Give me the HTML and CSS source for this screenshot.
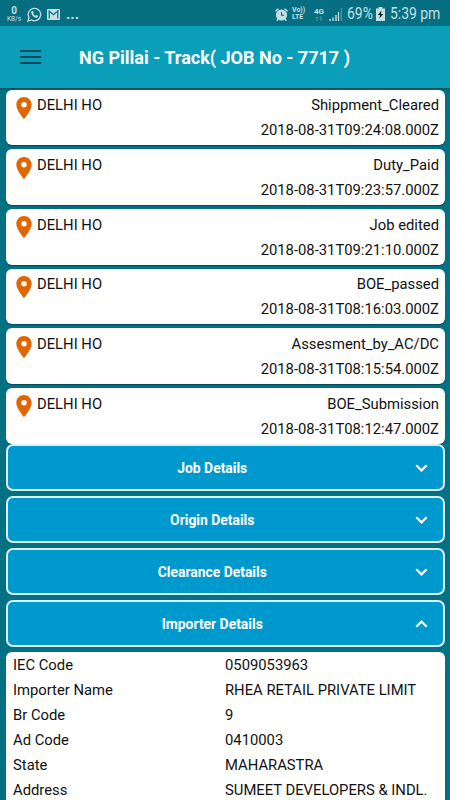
FILE: index.html
```
<!DOCTYPE html>
<html lang="en">
  <head>
    <meta charset="UTF-8" />
    <meta name="viewport" content="width=device-width, initial-scale=1.0" />
    <title>NG Pillai - Track</title>
    <link rel="stylesheet" href="styles.css">
  </head>
  <body>
    <!-- shared icons -->
    <svg class="icon-defs" width="0" height="0">
      <symbol id="pin" viewBox="5 2 14 20">
        <path d="M12 2C8.13 2 5 5.13 5 9c0 5.25 7 13 7 13s7-7.75 7-13c0-3.87-3.13-7-7-7zm0 9.5a2.5 2.5 0 0 1 0-5 2.5 2.5 0 0 1 0 5z" />
      </symbol>
      <symbol id="chevron" viewBox="0 0 12 8">
        <path d="M.8 1.2L6 6.400l5.200-5.200" fill="none" stroke="#fff" stroke-width="2.200" />
      </symbol>
    </svg>

    <div class="status-bar">
      <div class="net-speed"><b>0</b><span>KB/s</span></div>
      <svg class="whatsapp" width="15" height="15" viewBox="0 0 15 15">
        <path d="M1 14l1-3.5A6.2 6.2 0 1 1 4.500 13z" fill="none" stroke="#c5dfe3" stroke-width="1.3" />
        <path d="M4.900 4.100l1-.2.900 1.900-.6.900c.5 1 1.200 1.600 2.200 2.100l.8-.9 1.900.9-.2 1c-.5.8-1.500 1-2.400.7C6.400 9.700 5 8.200 4.400 6.400c-.3-.9 0-1.700.5-2.300z" fill="#c5dfe3" />
      </svg>
      <svg class="gmail" width="13" height="11" viewBox="0 0 13 11">
        <rect width="13" height="11" rx="1" fill="#c5dfe3" />
        <path d="M2.200 9.500V2l4.300 3.600L10.800 2v7.500" fill="none" stroke="#056f81" stroke-width="1.2" />
      </svg>
      <span class="more">...</span>

      <svg class="alarm" width="13" height="13" viewBox="0 0 13 13">
        <circle cx="6.500" cy="7" r="5.600" fill="#c5dfe3" />
        <path d="M.5 3.300L3.400.8M12.500 3.300L9.600.8M3 11l-1.200 1.700M10 11l1.200 1.700" stroke="#c5dfe3" stroke-width="1.500" />
        <path d="M6.500 4v3.300h2.700" fill="none" stroke="#056f81" stroke-width="1.1" />
      </svg>
      <div class="volte"><span>Vo))</span><span>LTE</span></div>
      <div class="network">
        <span>4G</span>
        <svg width="8" height="5" viewBox="0 0 8 5">
          <path d="M2 5V1M.7 2.200L2 .8l1.300 1.400M6 0v4M4.700 2.800L6 4.200l1.300-1.400" fill="none" stroke="#4d9ba7" stroke-width=".9" />
        </svg>
      </div>
      <svg class="signal" width="13" height="13" viewBox="0 0 13 13">
        <path d="M1 13v-2M4 13V9.500M7 13V7" stroke="#c5dfe3" stroke-width="1.400" />
        <path d="M9.500 13V4" stroke="#c5dfe3" stroke-width="1.2" />
        <path d="M12.300 13V0" stroke="#4d9ba7" stroke-width="1.2" />
      </svg>
      <div class="percent"><span>69%</span></div>
      <svg class="battery" width="9" height="14" viewBox="0 0 9 14">
        <path d="M2.500 0h4v1.500H9V14H0V1.500h2.500z" fill="#c5dfe3" />
        <path d="M5.500 3.500L1.800 8h2.200l-.6 3.500L7.200 7H5z" fill="#10272c" />
      </svg>
      <div class="clock"><span>5:39 pm</span></div>
    </div>

    <div class="navbar">
      <div class="menu-btn"><i></i><i></i><i></i></div>
      <h1>NG Pillai - Track( JOB No - 7717 )</h1>
    </div>

    <div class="content">
      <div class="track-list">
        <div class="track-card">
          <svg class="pin"><use href="#pin" /></svg>
          <span class="place">DELHI HO</span>
          <div class="event"><p>Shippment_Cleared</p><p>2018-08-31T09:24:08.000Z</p></div>
        </div>
        <div class="track-card">
          <svg class="pin"><use href="#pin" /></svg>
          <span class="place">DELHI HO</span>
          <div class="event"><p>Duty_Paid</p><p>2018-08-31T09:23:57.000Z</p></div>
        </div>
        <div class="track-card">
          <svg class="pin"><use href="#pin" /></svg>
          <span class="place">DELHI HO</span>
          <div class="event"><p>Job edited</p><p>2018-08-31T09:21:10.000Z</p></div>
        </div>
        <div class="track-card">
          <svg class="pin"><use href="#pin" /></svg>
          <span class="place">DELHI HO</span>
          <div class="event"><p>BOE_passed</p><p>2018-08-31T08:16:03.000Z</p></div>
        </div>
        <div class="track-card">
          <svg class="pin"><use href="#pin" /></svg>
          <span class="place">DELHI HO</span>
          <div class="event"><p>Assesment_by_AC/DC</p><p>2018-08-31T08:15:54.000Z</p></div>
        </div>
        <div class="track-card">
          <svg class="pin"><use href="#pin" /></svg>
          <span class="place">DELHI HO</span>
          <div class="event"><p>BOE_Submission</p><p>2018-08-31T08:12:47.000Z</p></div>
        </div>
      </div>

      <div class="accordion">
        <div class="accordion-btn"><span>Job Details</span><svg class="chevron"><use href="#chevron" /></svg></div>
        <div class="accordion-btn"><span>Origin Details</span><svg class="chevron"><use href="#chevron" /></svg></div>
        <div class="accordion-btn"><span>Clearance Details</span><svg class="chevron"><use href="#chevron" /></svg></div>
        <div class="accordion-btn open"><span>Importer Details</span><svg class="chevron"><use href="#chevron" /></svg></div>
      </div>

      <dl class="details">
        <dt>IEC Code</dt><dd>0509053963</dd>
        <dt>Importer Name</dt><dd>RHEA RETAIL PRIVATE LIMIT</dd>
        <dt>Br Code</dt><dd>9</dd>
        <dt>Ad Code</dt><dd>0410003</dd>
        <dt>State</dt><dd>MAHARASTRA</dd>
        <dt>Address</dt><dd>SUMEET DEVELOPERS &amp; INDL.</dd>
      </dl>
    </div>
  </body>
</html>
```
FILE: styles.css
```
* {
  box-sizing: border-box;
}

body {
  font-family: Roboto, "Liberation Sans", sans-serif;
  font-size: 14.8px;
  color: #111;
  background-color: #047083;
  display: flex;
  flex-direction: column;
  height: 100vh;
  margin: 0;
  overflow: hidden;
}

.icon-defs {
  position: absolute;
}

/* status bar */
.status-bar {
  display: flex;
  align-items: center;
  flex-shrink: 0;
  height: 26px;
  padding: 2px 8px 0 6px;
  background-color: #056f81;
  color: #c5dfe3;
}

.net-speed {
  display: flex;
  flex-direction: column;
  align-items: center;
  width: 16px;
  font-size: 6.5px;
  line-height: 7px;
}

.net-speed b {
  font-size: 10px;
  line-height: 10px;
}

.whatsapp {
  margin-left: 5px;
}

.gmail {
  margin-left: 5px;
}

.more {
  margin-left: 6px;
  font-size: 15px;
  font-weight: bold;
  line-height: 16px;
}

.alarm {
  margin-left: auto;
}

.volte {
  display: flex;
  flex-direction: column;
  width: 14px;
  margin-left: 4px;
  font-size: 7px;
  font-weight: bold;
  line-height: 7px;
}

.network {
  display: flex;
  flex-direction: column;
  align-items: center;
  width: 12px;
  margin-left: 7px;
  font-size: 8px;
  font-weight: bold;
  line-height: 8px;
}

.signal {
  margin-left: 4px;
}

.percent,
.clock {
  font-size: 16px;
  line-height: 20px;
  white-space: nowrap;
}

.percent {
  width: 26px;
  margin-left: 5px;
}

.percent span,
.clock span {
  display: inline-block;
  transform: scaleX(0.87);
  transform-origin: left;
}

.battery {
  margin-left: 3px;
}

.clock {
  width: 52px;
  margin-left: 5px;
}

/* title bar */
.navbar {
  display: flex;
  align-items: center;
  flex-shrink: 0;
  height: 62px;
  padding: 0 20px 1px;
  background-color: #0a9eb8;
  box-shadow: 0 1px 2px rgba(0, 0, 0, 0.35);
}

.menu-btn {
  display: flex;
  flex-direction: column;
  gap: 4px;
  width: 21px;
}

.menu-btn i {
  height: 2px;
  background-color: #07495a;
}

.navbar h1 {
  margin: 2px 0 0 38px;
  font-size: 18px;
  font-weight: bold;
  color: #fff;
  white-space: nowrap;
}

.content {
  padding: 1.5px 5px 0 5.5px;
}

/* tracking events */
.track-list {
  display: flex;
  flex-direction: column;
  gap: 4px;
}

.track-card {
  display: flex;
  align-items: flex-start;
  height: 55.7px;
  padding: 3.7px 6px 0 10.5px;
  background-color: #fff;
  border-radius: 6px;
  box-shadow: 0 1px 1px rgba(0, 0, 0, 0.35);
  line-height: 25px;
}

.pin {
  width: 16px;
  height: 22px;
  margin-top: 3.8px;
  fill: #e26600;
}

.place {
  margin-left: 5px;
}

.event {
  margin-left: auto;
  text-align: right;
}

.event p {
  margin: 0;
}

/* collapsible sections */
.accordion {
  display: flex;
  flex-direction: column;
  gap: 5px;
}

.accordion-btn {
  display: flex;
  align-items: center;
  height: 47px;
  padding: 1px 15px 0 2px;
  background-color: #0099ce;
  border: 2px solid #dceff5;
  border-radius: 7px;
  font-size: 13.9px;
  font-weight: bold;
  color: #fff;
}

.accordion-btn span {
  flex: 1;
  text-align: center;
}

.chevron {
  width: 13px;
  height: 8px;
}

.open .chevron {
  transform: rotate(180deg);
}

/* importer panel */
.details {
  display: grid;
  grid-template-columns: 212px 1fr;
  margin: 5px 0 0;
  padding: 1px 0 20px 7.5px;
  background-color: #fff;
  border-radius: 6px;
  line-height: 25px;
  white-space: nowrap;
}

.details dd {
  margin: 0;
}
```
